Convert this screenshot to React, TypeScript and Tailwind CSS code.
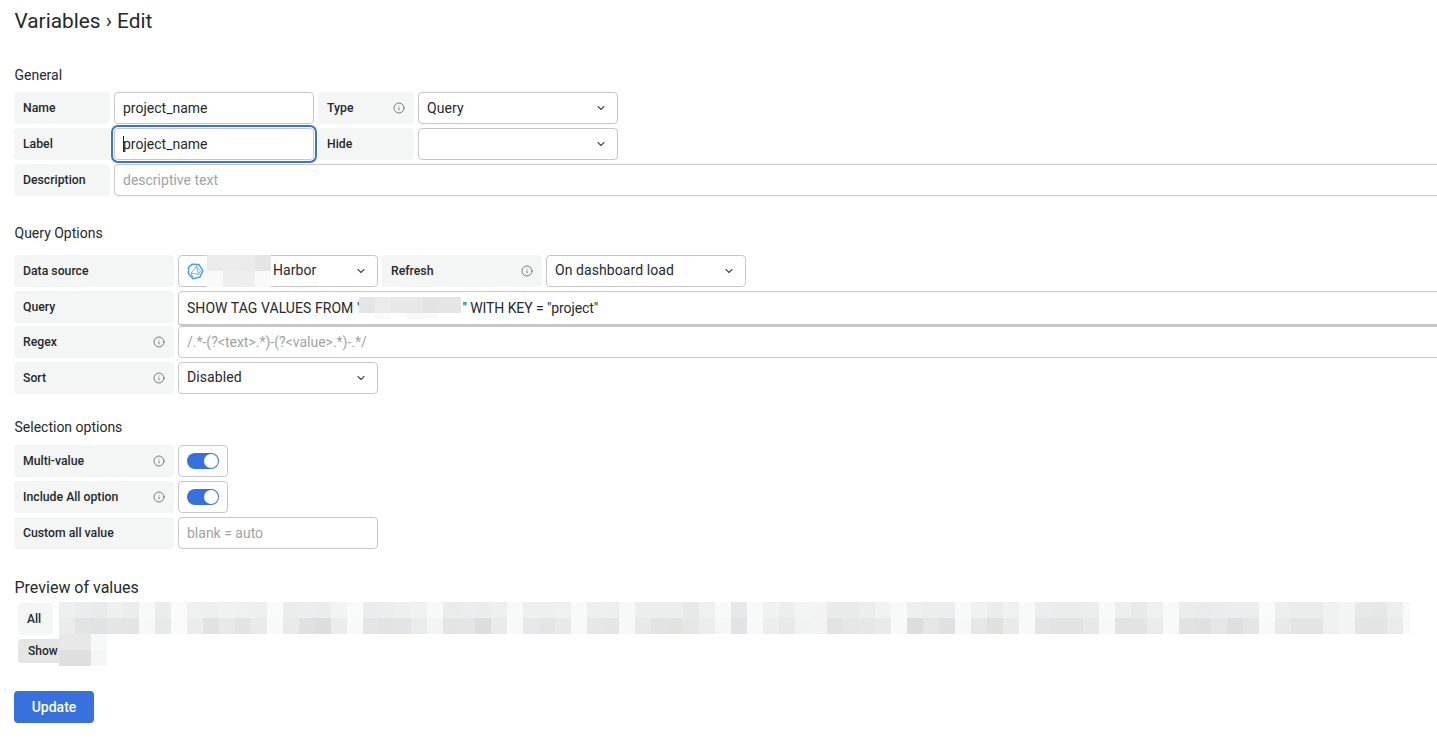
import { ChevronDown, Info } from "lucide-react";
import type { ReactNode } from "react";

const topRow = "eef0ef ebeced e9ebea eef0ef ebedec f8f9f9 ebeded fafafa eff1f0 eef0f0 f0f2f1 eff1f0 eef0ef f9faf9 ebeded ecedee ebedec f2f4f3 f9fafa ebeced ecedec eeefef f0f2f1 f7f9f8 e9ebed ebedee ebeded eef0f0 f9f9f9 eef0ef eeefef eff1f0 f9f9f9 eef0ef ecefee f7f9f8 ecedee ecedee ecedee e7e9e8 eff1f0 f8faf9 e6e8ea f8fafa f0f1f1 ecedec f3f5f4 f3f3f3 e9ebea e9ebea eceeed f1f2f2 f9f9fa eeefef ecedee ecedee f8faf9 f0f2f1 ebedec eff1f0 f9f9f9 ecedee ebedec ebedec eceeed f9f9f9 eceef1 e8eaea eff1f0 f9f9f9 ebeded e9ebee ebeced ebedee eceeed f9fafa edefee ebeded ebeded f0f2f1 f3f5f4 e7e9e8 e6e8e8 edefef f8f9f9".split(" ");
const bottomRow = "ebeded e2e4e4 e1e2e4 e4e6e6 e3e5e4 f7f9f8 e8eaea f9faf9 ebeded e1e3e2 e8eaea e2e4e3 e9ebea f8f9f9 e9ebea dfe1e0 dcdddf ebeded f8fafa e4e6e6 e2e4e3 e3e4e7 eaecec f4f4f4 e3e5e5 e4e6e6 dcdedd e9ebeb f8f9f9 e6e8ea e4e6e5 e8eaea f8f9f9 e6e8e7 e4e6e5 f7f9f8 e8eaea e2e4e3 e1e3e1 e5e7e6 ecedee f5f6f6 e1e3e5 f8fafa ecedee e8eaea f1f3f2 f3f3f3 e1e3e5 e4e6e8 e5e7e8 e9ebea f8f9f9 dcdedd e5e7e6 dfe1e0 f7f9f8 e6e8e7 dfe1df e9ebea f8f9f9 e4e6e6 e2e4e3 e2e4e3 e6e8ea f7f8f8 e2e4e3 e2e4e3 eaecec f8f9f9 e1e3e2 dfe1e0 e4e6e8 dee0df e4e6e5 f8f9f9 e8eaea e2e4e6 e2e4e6 eff1f0 f3f5f4 e3e5e4 e3e5e4 eaecec f8f9f9".split(" ");

// pixelated patch that hides a value in the picture
function Blur({ rows, className }: { rows: string[][]; className?: string }) {
  return (
    <div className={className}>
      {rows.map((row, i) => (
        <div key={i} className="flex">
          {row.map((c, j) => (
            <span key={j} className="w-4 h-4 shrink-0" style={{ background: "#" + c }} />
          ))}
        </div>
      ))}
    </div>
  );
}

function Label({ children, wide, info }: { children: ReactNode; wide?: boolean; info?: boolean }) {
  return (
    <div className={`${wide ? "w-[160px]" : "w-[96px]"} h-8 shrink-0 flex items-center justify-between pl-[9px] pr-[9px] bg-[#f4f5f5] rounded-sm text-[12.25px] font-medium text-[#24292e]`}>
      <span>{children}</span>
      {info && <Info size={12} strokeWidth={1.6} className="text-[#5a6068]" />}
    </div>
  );
}

function Select({ value, raised }: { value?: string; raised?: boolean }) {
  return (
    <div className="w-[200px] h-8 shrink-0 flex items-center justify-between pl-2 pr-[10px] bg-white border border-[#c7c7c7] rounded-sm text-sm tracking-[0.08px] text-[#24292e]">
      <span className={raised ? "pb-[2px]" : ""}>{value}</span>
      <ChevronDown size={12} strokeWidth={2.2} className="text-[#464c54]" />
    </div>
  );
}

function Field({ value, placeholder, className }: { value?: string; placeholder?: string; className: string }) {
  return (
    <div className={`${className} h-8 shrink-0 flex items-center pl-2 bg-white border border-[#c7c7c7] rounded-sm text-sm ${value ? "text-[#24292e]" : "text-[#a0a3a6]"}`}>
      {value ?? placeholder}
    </div>
  );
}

function Toggle() {
  return (
    <div className="w-[50px] h-8 shrink-0 flex items-center justify-center bg-white border border-[#c7c7c7] rounded-sm">
      <div className="w-8 h-4 rounded-full bg-[#3871dc] flex items-center justify-end pr-px">
        <div className="w-[14px] h-[14px] rounded-full bg-white" />
      </div>
    </div>
  );
}

function SectionTitle({ children, className }: { children: ReactNode; className: string }) {
  return <h3 className={`${className} ml-[0.5px] text-sm leading-[18px] text-[#24292e]`}>{children}</h3>;
}

export default function App() {
  return (
    <div className="w-[1437px] h-[742px] overflow-hidden bg-white pl-[14px] font-['Roboto',sans-serif]">
      <h1 className="pt-[8px] ml-[0.5px] text-[20.8px] leading-[26px] text-[#24292e]">Variables › Edit</h1>

      <SectionTitle className="mt-[32px]">General</SectionTitle>
      <div className="mt-[8px] flex flex-col gap-1">
        <div className="flex gap-1">
          <Label>Name</Label>
          <Field value="project_name" className="w-[200px]" />
          <Label info>Type</Label>
          <Select value="Query" />
        </div>
        <div className="flex gap-1">
          <Label>Label</Label>
          <div className="w-[200px] h-8 shrink-0 flex items-center pl-2 bg-white border border-[#c7c7c7] rounded-sm text-sm text-[#24292e] outline-2 outline-offset-1 outline-[#3871dc]">
            <span className="w-px h-4 bg-[#24292e] -mr-px" />
            project_name
          </div>
          <Label>Hide</Label>
          <Select />
        </div>
        <div className="flex gap-1">
          <Label>Description</Label>
          <Field placeholder="descriptive text" className="w-[1400px]" />
        </div>
      </div>

      <SectionTitle className="mt-[28px]">Query Options</SectionTitle>
      <div className="mt-[13px] flex flex-col">
        <div className="flex gap-1 mb-1">
          <Label wide>Data source</Label>
          <div className="relative w-[200px] h-8 shrink-0 flex items-center justify-between pl-2 pr-[10px] bg-white border border-[#c7c7c7] rounded-sm text-sm text-[#24292e]">
            <svg width="17" height="17" viewBox="0 0 17 17" fill="none" stroke="#4f9ff0" strokeLinejoin="round">
              <path d="M5.2 1.2 12 1.6 15.8 7.6 13 14 6 15.8 1.4 10.4 1.6 4.4Z" strokeWidth="1.6" />
              <path d="M9.5 3.5 4 10 11.5 11.5ZM4 10 6 15M9.5 3.5 13.5 8 11.5 11.5" strokeWidth="0.8" />
            </svg>
            <Blur rows={[["ebebeb", "ececec", "ebebeb", "e5e5e5"], ["f9f9f9", "eeeeee", "eeeeee", "f9f9f9"]]} className="absolute left-[28px] -top-px" />
            <span className="absolute left-[94px] pb-[2px] tracking-[0.08px]">Harbor</span>
            <ChevronDown size={12} strokeWidth={2.2} className="text-[#464c54]" />
          </div>
          <Label wide info>Refresh</Label>
          <Select value="On dashboard load" raised />
        </div>
        <div className="flex gap-1">
          <Label wide>Query</Label>
          <div className="relative w-[1400px] h-[35px] shrink-0 flex items-center pl-2 bg-white border border-b-2 border-[#c7c7c7] rounded-sm text-sm text-[#24292e]">
            <span className="tracking-[0.06px]">SHOW TAG VALUES FROM '</span>
            <span className="w-[103px] shrink-0" />
            <span className="tracking-[-0.08px]">" WITH KEY = "project"</span>
            <Blur
              rows={[["e5e5e5", "ebebeb", "e8e8e8", "e8e8e8", "e3e3e3", "e5e5e5", "e5e5e5"], ["ffffff", "f9f9f9", "ffffff", "f8f8f8", "f9f9f9", "ffffff", "ffffff"]]}
              className="absolute left-[180px] top-[5px] w-[102px] h-[22px] overflow-hidden"
            />
          </div>
        </div>
        <div className="flex gap-1 mb-1">
          <Label wide info>Regex</Label>
          <Field placeholder="/.*-(?<text>.*)-(?<value>.*)-.*/" className="w-[1400px]" />
        </div>
        <div className="flex gap-1">
          <Label wide info>Sort</Label>
          <Select value="Disabled" raised />
        </div>
      </div>

      <SectionTitle className="mt-[24px]">Selection options</SectionTitle>
      <div className="mt-[9px] flex flex-col gap-1">
        <div className="flex gap-1">
          <Label wide info>Multi-value</Label>
          <Toggle />
        </div>
        <div className="flex gap-1">
          <Label wide info>Include All option</Label>
          <Toggle />
        </div>
        <div className="flex gap-1">
          <Label wide>Custom all value</Label>
          <Field placeholder="blank = auto" className="w-[200px]" />
        </div>
      </div>

      <h3 className="mt-[29px] ml-[0.5px] text-base leading-[20px] text-[#24292e]">Preview of values</h3>
      <div className="relative mt-[4px] ml-1 h-[62px]">
        <div className="flex">
          <span className="mt-px w-[35px] h-8 flex items-center justify-center pr-[3px] bg-[#f4f5f5] rounded-sm text-xs font-medium text-[#24292e]">All</span>
          <Blur rows={[topRow, bottomRow]} className="ml-[6px] w-[1351px] overflow-hidden" />
        </div>
        <button className="absolute left-0 top-[37px] w-[60px] h-6 pl-[10px] text-left bg-[#e5e5e5] rounded-sm text-xs font-medium text-[#24292e]">Show</button>
        <Blur rows={[["e8e8e8", "e8e8e8", "f7f9f8"], ["dfdfdf", "dfdfdf", "f6f6f6"]]} className="absolute left-[41px] top-[32px]" />
      </div>

      <button className="mt-[27px] w-[80px] h-8 bg-[#3871dc] rounded-sm text-sm font-medium text-white">Update</button>
    </div>
  );
}
